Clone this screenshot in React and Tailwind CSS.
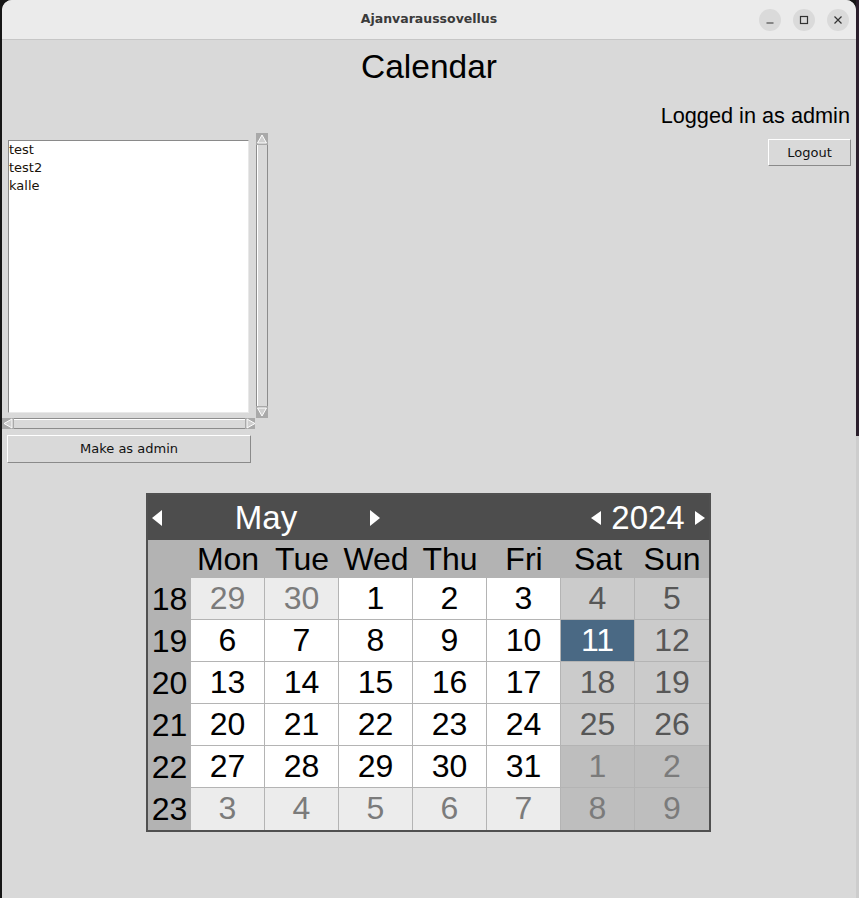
import React from 'react';

const weeks = [
  { wk: 18, days: [[29, 'o'], [30, 'o'], [1, 'c'], [2, 'c'], [3, 'c'], [4, 'c'], [5, 'c']] },
  { wk: 19, days: [[6, 'c'], [7, 'c'], [8, 'c'], [9, 'c'], [10, 'c'], [11, 's'], [12, 'c']] },
  { wk: 20, days: [[13, 'c'], [14, 'c'], [15, 'c'], [16, 'c'], [17, 'c'], [18, 'c'], [19, 'c']] },
  { wk: 21, days: [[20, 'c'], [21, 'c'], [22, 'c'], [23, 'c'], [24, 'c'], [25, 'c'], [26, 'c']] },
  { wk: 22, days: [[27, 'c'], [28, 'c'], [29, 'c'], [30, 'c'], [31, 'c'], [1, 'o'], [2, 'o']] },
  { wk: 23, days: [[3, 'o'], [4, 'o'], [5, 'o'], [6, 'o'], [7, 'o'], [8, 'o'], [9, 'o']] },
];

const dayNames = ['Mon', 'Tue', 'Wed', 'Thu', 'Fri', 'Sat', 'Sun'];

const cellClass = (kind, weekend) => {
  if (kind === 's') return 'bg-[#4a6984] text-white';
  if (kind === 'o') return weekend ? 'bg-[#bebebe] text-[#7b7b7b]' : 'bg-[#ececec] text-[#7b7b7b]';
  return weekend ? 'bg-[#cbcbcb] text-[#575757]' : 'bg-white text-black';
};

const Tri = ({ dir, w, h }) => {
  const pts = dir === 'left' ? `${w},0 ${w},${h} 0,${h / 2}` : `0,0 0,${h} ${w},${h / 2}`;
  return (
    <svg width={w} height={h} viewBox={`0 0 ${w} ${h}`} className="shrink-0">
      <polygon points={pts} fill="white" />
    </svg>
  );
};

const ScrollArrow = ({ dir }) => {
  const pts = {
    up: '6,2 10.5,10 1.5,10',
    down: '6,10 10.5,2 1.5,2',
    left: '2,5.5 10,1 10,10',
    right: '10,5.5 2,1 2,10',
  }[dir];
  return (
    <div className="w-[12px] h-[12px] bg-[#a9a9a9] shrink-0">
      <svg width="12" height="12" viewBox="0 0 12 12">
        <polygon points={pts} fill="#cfcfcf" stroke="white" strokeWidth="1" />
      </svg>
    </div>
  );
};

const Button = ({ children, className }) => (
  <div
    className={`flex items-center justify-center border border-t-white border-l-white border-b-[#8a8a8a] border-r-[#8a8a8a] bg-[#d9d9d9] text-[13px] text-[#111] font-['DejaVu_Sans',sans-serif] ${className}`}
  >
    {children}
  </div>
);

export default function App() {
  return (
    <div className="w-[859px] h-[898px] bg-[#161616] flex overflow-hidden font-['Liberation_Sans',Arial,sans-serif]">
      <div className="w-[2px] shrink-0" />
      <div className="w-[854px] h-full shrink-0 flex flex-col bg-[#d9d9d9] rounded-t-[10px] overflow-hidden">
        {/* title bar */}
        <div className="relative h-[40px] shrink-0 bg-[#ebebeb] border-b border-[#c6c6c6] flex items-center justify-center">
          <span className="text-[12.5px] font-bold text-[#3a3a3a] font-['DejaVu_Sans',sans-serif]">Ajanvaraussovellus</span>
          <div className="absolute right-[7px] top-[9px] flex gap-[12px]">
            <div className="w-[22px] h-[22px] rounded-full bg-[#dadada] flex items-center justify-center">
              <svg width="10" height="10" viewBox="0 0 10 10"><line x1="1.5" y1="8" x2="8.5" y2="8" stroke="#333" strokeWidth="1.2" /></svg>
            </div>
            <div className="w-[22px] h-[22px] rounded-full bg-[#dadada] flex items-center justify-center">
              <svg width="10" height="10" viewBox="0 0 10 10"><rect x="1.5" y="1.5" width="7" height="7" fill="none" stroke="#333" strokeWidth="1.2" /></svg>
            </div>
            <div className="w-[22px] h-[22px] rounded-full bg-[#dadada] flex items-center justify-center">
              <svg width="10" height="10" viewBox="0 0 10 10"><path d="M1.5 1.5 L8.5 8.5 M8.5 1.5 L1.5 8.5" stroke="#333" strokeWidth="1.2" /></svg>
            </div>
          </div>
        </div>

        {/* content */}
        <div className="flex flex-col">
          <h1 className="mt-[8px] text-center text-[33.5px] leading-[38px] text-black">Calendar</h1>
          <div className="h-[47px] flex items-end justify-end pr-[6px] pb-[5px]">
            <span className="text-[21.7px] leading-[25px] text-black">Logged in as admin</span>
          </div>

          <div className="flex justify-between items-start">
            <div className="flex flex-col">
              <div className="flex">
                <div className="flex flex-col">
                  <div className="w-[253px] h-[285px] pl-[6px] pr-[6px] pt-[7px] pb-[5px]">
                    <div className="w-full h-full bg-white border border-t-[#8a8a8a] border-l-[#8a8a8a] border-r-[#e8e8e8] border-b-[#e8e8e8] font-['DejaVu_Sans',sans-serif] text-[13px] leading-[18px] text-[#1a1208]">
                      <div>test</div>
                      <div>test2</div>
                      <div>kalle</div>
                    </div>
                  </div>
                  <div className="w-[253px] h-[11px] flex items-center overflow-hidden">
                    <ScrollArrow dir="left" />
                    <div className="flex-1 h-[11px] border-y border-[#8c8c8c] bg-[#d9d9d9]">
                      <div className="h-full border-t border-white" />
                    </div>
                    <div className="w-[10px] h-[11px] overflow-hidden"><ScrollArrow dir="right" /></div>
                  </div>
                </div>
                <div className="ml-[1px] w-[12px] h-[285px] flex flex-col">
                  <ScrollArrow dir="up" />
                  <div className="flex-1 bg-[#d9d9d9] border-x border-[#8c8c8c]">
                    <div className="h-full border-l border-white" />
                  </div>
                  <ScrollArrow dir="down" />
                </div>
              </div>
              <Button className="ml-[5px] mt-[6px] w-[244px] h-[28px]">Make as admin</Button>
            </div>
            <Button className="mt-[6px] mr-[5px] w-[83px] h-[27px]">Logout</Button>
          </div>

          {/* calendar */}
          <div className="ml-[144px] mt-[30px] w-[565px] h-[339px] border-2 border-[#505050] flex flex-col">
            <div className="h-[45px] bg-[#4d4d4d] flex items-center text-white text-[33px] leading-[45px]">
              <div className="flex items-center pl-[4px]">
                <Tri dir="left" w={10} h={16} />
                <span className="w-[208px] text-center">May</span>
                <Tri dir="right" w={10} h={16} />
              </div>
              <div className="flex-1" />
              <div className="flex items-center pr-[4px]">
                <Tri dir="left" w={10} h={14} />
                <span className="w-[94px] text-center">2024</span>
                <Tri dir="right" w={10} h={14} />
              </div>
            </div>
            <div className="h-[38px] bg-[#b3b3b3] flex text-[32px] leading-[38px] text-black">
              <div className="w-[43px]" />
              {dayNames.map((d) => (
                <div key={d} className="w-[74px] text-center">{d}</div>
              ))}
            </div>
            {weeks.map((w, ri) => (
              <div key={w.wk} className="h-[42px] flex text-[32px]">
                <div className="w-[43px] bg-[#b3b3b3] text-black text-center leading-[42px]">{w.wk}</div>
                {w.days.map(([n, kind], ci) => (
                  <div
                    key={ci}
                    className={`w-[74px] text-center leading-[41px] border-[#b4b4b4] ${ci < 6 ? 'border-r' : ''} ${ri < 5 ? 'border-b' : ''} ${cellClass(kind, ci >= 5)}`}
                  >
                    {n}
                  </div>
                ))}
              </div>
            ))}
          </div>
        </div>
      </div>
      <div className="w-[3px] shrink-0 flex flex-col">
        <div className="h-[436px] bg-[#2a1e2b]" />
        <div className="flex-1 bg-[#cdcdcd]" />
      </div>
    </div>
  );
}
